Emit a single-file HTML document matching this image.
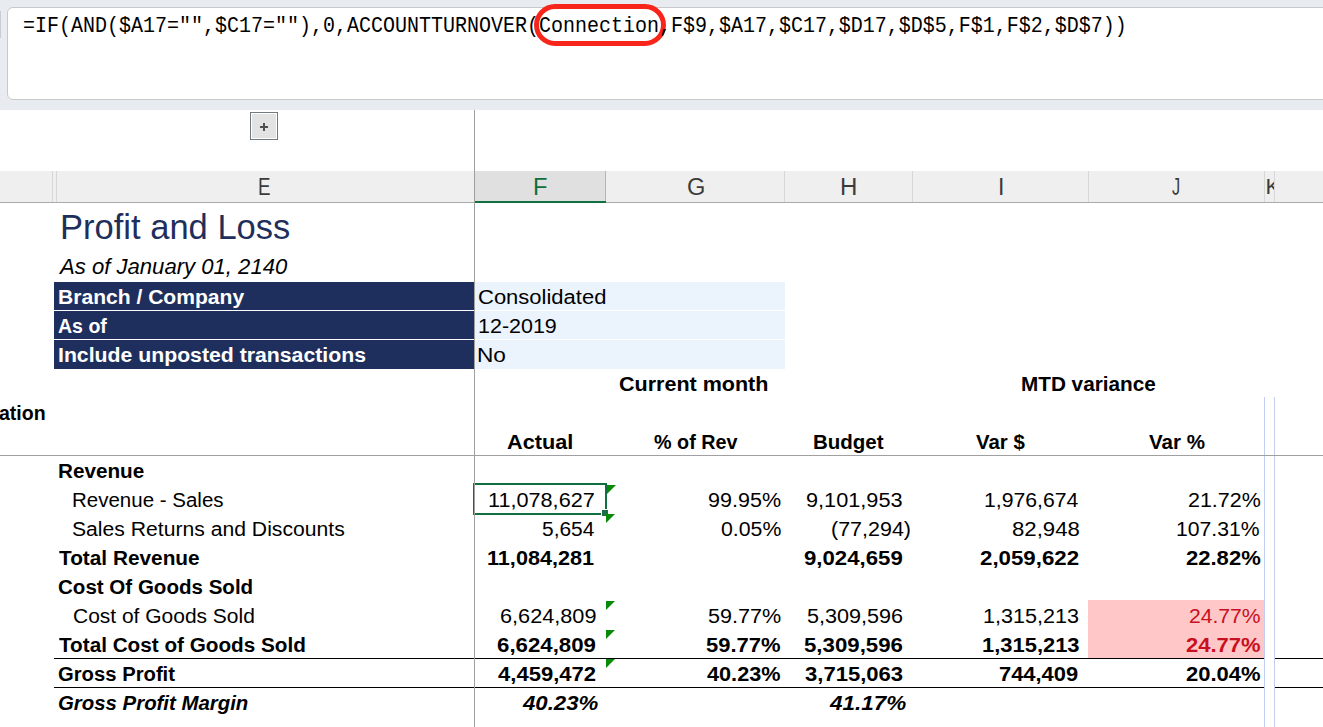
<!DOCTYPE html><html><head><meta charset="utf-8"><style>
html,body{margin:0;padding:0}body{width:1323px;height:727px;overflow:hidden;position:relative;background:#fff;font-family:"Liberation Sans",sans-serif}
.a{position:absolute}.t{position:absolute;white-space:pre;transform-origin:0 0}
</style></head><body>
<div class="a" style="left:0;top:0;width:1323px;height:110px;background:#e8ecf0"></div>
<div class="a" style="left:0;top:11px;width:1px;height:27px;background:#c9cdd1"></div>
<div class="a" style="left:7px;top:7px;width:1330px;height:91px;background:#fff;border:1px solid #c8c9ca;border-radius:6px"></div>
<div class="t" style="left:23px;top:15px;font-family:'Liberation Mono',monospace;font-size:21.6px;line-height:22px;color:#000;transform:scaleX(0.9259)">=IF(AND($A17=&quot;&quot;,$C17=&quot;&quot;),0,ACCOUNTTURNOVER(Connection,F$9,$A17,$C17,$D17,$D$5,F$1,F$2,$D$7))</div>
<div class="a" style="left:534px;top:4px;width:122px;height:32px;border:5px solid #f8251b;border-radius:21px"></div>
<div class="t" style="left:659px;top:15px;font-family:'Liberation Mono',monospace;font-size:21.6px;line-height:22px;color:#000;transform:scaleX(0.9259)">,</div>
<div class="a" style="left:250px;top:112px;width:26px;height:26px;border:1px solid #707880;background:#fff"></div>
<div class="a" style="left:252px;top:114px;width:24px;height:24px;background:#e3e3e3"></div>
<div class="a" style="left:260px;top:126px;width:8px;height:2px;background:#505050"></div>
<div class="a" style="left:263px;top:123px;width:2px;height:8px;background:#505050"></div>
<div class="a" style="left:0;top:171px;width:1323px;height:31px;background:#efefef"></div>
<div class="a" style="left:475px;top:171px;width:130px;height:31px;background:#e0e0e0"></div>
<div class="a" style="left:0;top:202px;width:1323px;height:1px;background:#a9a9a9"></div>
<div class="a" style="left:52px;top:171px;width:1px;height:31px;background:#d8d8d8"></div>
<div class="a" style="left:56px;top:171px;width:1px;height:31px;background:#d8d8d8"></div>
<div class="a" style="left:784px;top:171px;width:1px;height:31px;background:#d8d8d8"></div>
<div class="a" style="left:912px;top:171px;width:1px;height:31px;background:#d8d8d8"></div>
<div class="a" style="left:1088px;top:171px;width:1px;height:31px;background:#d8d8d8"></div>
<div class="a" style="left:1264px;top:171px;width:1px;height:31px;background:#d8d8d8"></div>
<div class="a" style="left:1274px;top:171px;width:1px;height:31px;background:#d8d8d8"></div>
<div class="a" style="left:605px;top:171px;width:1px;height:31px;background:#b4b4b4"></div>
<div class="a" style="left:475px;top:201px;width:131px;height:2px;background:#107040"></div>
<div class="a" style="left:54px;top:282px;width:420px;height:28px;background:#1f2f5d"></div>
<div class="a" style="left:475px;top:282px;width:310px;height:28px;background:#ebf3fd"></div>
<div class="a" style="left:54px;top:311px;width:420px;height:28px;background:#1f2f5d"></div>
<div class="a" style="left:475px;top:311px;width:310px;height:28px;background:#ebf3fd"></div>
<div class="a" style="left:54px;top:340px;width:420px;height:29px;background:#1f2f5d"></div>
<div class="a" style="left:475px;top:340px;width:310px;height:29px;background:#ebf3fd"></div>
<div class="a" style="left:1088px;top:600px;width:177px;height:58px;background:#ffc7c8"></div>
<div class="a" style="left:1264px;top:397px;width:1px;height:330px;background:#c2cfee"></div>
<div class="a" style="left:1274px;top:397px;width:1px;height:330px;background:#c2cfee"></div>
<div class="a" style="left:54px;top:658px;width:1210px;height:1px;background:#000"></div>
<div class="a" style="left:1275px;top:658px;width:48px;height:1px;background:#000"></div>
<div class="a" style="left:54px;top:687px;width:1210px;height:1px;background:#000"></div>
<div class="a" style="left:1275px;top:687px;width:48px;height:1px;background:#000"></div>
<div class="a" style="left:0;top:455px;width:1323px;height:1px;background:#a0a0a0"></div>
<div class="a" style="left:474px;top:110px;width:1px;height:617px;background:#a0a0a0"></div>
<div class="t" style="left:258.27px;top:176px;font-family:'Liberation Sans';font-size:23px;line-height:23px;color:#3b3b3b;transform:scaleX(0.8154);">E</div>
<div class="t" style="left:532.95px;top:176px;font-family:'Liberation Sans';font-size:23px;line-height:23px;color:#0f6e3a;transform:scaleX(1.0273);">F</div>
<div class="t" style="left:686.97px;top:176px;font-family:'Liberation Sans';font-size:23px;line-height:23px;color:#3b3b3b;transform:scaleX(1.0267);">G</div>
<div class="t" style="left:839.51px;top:176px;font-family:'Liberation Sans';font-size:23px;line-height:23px;color:#3b3b3b;transform:scaleX(1.0462);">H</div>
<div class="t" style="left:998.05px;top:176px;font-family:'Liberation Sans';font-size:23px;line-height:23px;color:#3b3b3b;">I</div>
<div class="t" style="left:1172.29px;top:176px;font-family:'Liberation Sans';font-size:23px;line-height:23px;color:#3b3b3b;transform:scaleX(0.7111);">J</div>
<div class="t" style="left:60.14px;top:209px;font-family:'Liberation Sans';font-size:35px;line-height:35px;color:#1f2f5c;transform:scaleX(0.9865);">Profit and Loss</div>
<div class="t" style="left:60.00px;top:256px;font-family:'Liberation Sans';font-size:22px;line-height:22px;color:#000;font-style:italic;transform:scaleX(1.0044);">As of January 01, 2140</div>
<div class="t" style="left:58.15px;top:287px;font-family:'Liberation Sans';font-size:20px;line-height:20px;color:#fff;font-weight:bold;transform:scaleX(1.0534);">Branch / Company</div>
<div class="t" style="left:58.02px;top:316px;font-family:'Liberation Sans';font-size:20px;line-height:20px;color:#fff;font-weight:bold;transform:scaleX(0.9776);">As of</div>
<div class="t" style="left:57.94px;top:345px;font-family:'Liberation Sans';font-size:20px;line-height:20px;color:#fff;font-weight:bold;transform:scaleX(1.0618);">Include unposted transactions</div>
<div class="t" style="left:477.60px;top:287px;font-family:'Liberation Sans';font-size:20px;line-height:20px;color:#000;transform:scaleX(1.1000);">Consolidated</div>
<div class="t" style="left:477.63px;top:316px;font-family:'Liberation Sans';font-size:20px;line-height:20px;color:#000;transform:scaleX(1.0736);">12-2019</div>
<div class="t" style="left:477.04px;top:345px;font-family:'Liberation Sans';font-size:20px;line-height:20px;color:#000;transform:scaleX(1.1304);">No</div>
<div class="t" style="left:618.62px;top:374px;font-family:'Liberation Sans';font-size:20px;line-height:20px;color:#000;font-weight:bold;transform:scaleX(1.0759);">Current month</div>
<div class="t" style="left:1020.96px;top:374px;font-family:'Liberation Sans';font-size:20px;line-height:20px;color:#000;font-weight:bold;transform:scaleX(1.0357);">MTD variance</div>
<div class="t" style="left:-0.98px;top:403px;font-family:'Liberation Sans';font-size:20px;line-height:20px;color:#000;font-weight:bold;transform:scaleX(0.9761);">ation</div>
<div class="t" style="left:506.62px;top:432px;font-family:'Liberation Sans';font-size:20px;line-height:20px;color:#000;font-weight:bold;transform:scaleX(1.0831);">Actual</div>
<div class="t" style="left:653.70px;top:432px;font-family:'Liberation Sans';font-size:20px;line-height:20px;color:#000;font-weight:bold;transform:scaleX(0.9881);">% of Rev</div>
<div class="t" style="left:812.77px;top:432px;font-family:'Liberation Sans';font-size:20px;line-height:20px;color:#000;font-weight:bold;transform:scaleX(1.0250);">Budget</div>
<div class="t" style="left:976.40px;top:432px;font-family:'Liberation Sans';font-size:20px;line-height:20px;color:#000;font-weight:bold;transform:scaleX(1.0208);">Var $</div>
<div class="t" style="left:1148.80px;top:432px;font-family:'Liberation Sans';font-size:20px;line-height:20px;color:#000;font-weight:bold;transform:scaleX(1.0278);">Var %</div>
<div class="t" style="left:58.37px;top:461px;font-family:'Liberation Sans';font-size:20px;line-height:20px;color:#000;font-weight:bold;transform:scaleX(1.0341);">Revenue</div>
<div class="t" style="left:72.05px;top:490px;font-family:'Liberation Sans';font-size:20px;line-height:20px;color:#000;transform:scaleX(1.0248);">Revenue - Sales</div>
<div class="t" style="left:72.34px;top:519px;font-family:'Liberation Sans';font-size:20px;line-height:20px;color:#000;transform:scaleX(1.0574);">Sales Returns and Discounts</div>
<div class="t" style="left:58.90px;top:548px;font-family:'Liberation Sans';font-size:20px;line-height:20px;color:#000;font-weight:bold;transform:scaleX(1.0400);">Total Revenue</div>
<div class="t" style="left:57.87px;top:577px;font-family:'Liberation Sans';font-size:20px;line-height:20px;color:#000;font-weight:bold;transform:scaleX(1.0271);">Cost Of Goods Sold</div>
<div class="t" style="left:73.05px;top:606px;font-family:'Liberation Sans';font-size:20px;line-height:20px;color:#000;transform:scaleX(1.0485);">Cost of Goods Sold</div>
<div class="t" style="left:58.90px;top:635px;font-family:'Liberation Sans';font-size:20px;line-height:20px;color:#000;font-weight:bold;transform:scaleX(1.0350);">Total Cost of Goods Sold</div>
<div class="t" style="left:57.99px;top:664px;font-family:'Liberation Sans';font-size:20px;line-height:20px;color:#000;font-weight:bold;transform:scaleX(1.0122);">Gross Profit</div>
<div class="t" style="left:58.38px;top:693px;font-family:'Liberation Sans';font-size:20px;line-height:20px;color:#000;font-weight:bold;font-style:italic;transform:scaleX(1.0195);">Gross Profit Margin</div>
<div class="t" style="left:488.12px;top:490px;font-family:'Liberation Sans';font-size:20px;line-height:20px;color:#000;transform:scaleX(1.0825);">11,078,627</div>
<div class="t" style="left:708.22px;top:490px;font-family:'Liberation Sans';font-size:20px;line-height:20px;color:#000;transform:scaleX(1.0773);">99.95%</div>
<div class="t" style="left:806.31px;top:490px;font-family:'Liberation Sans';font-size:20px;line-height:20px;color:#000;transform:scaleX(1.0851);">9,101,953</div>
<div class="t" style="left:984.14px;top:490px;font-family:'Liberation Sans';font-size:20px;line-height:20px;color:#000;transform:scaleX(1.0602);">1,976,674</div>
<div class="t" style="left:1188.03px;top:490px;font-family:'Liberation Sans';font-size:20px;line-height:20px;color:#000;transform:scaleX(1.0727);">21.72%</div>
<div class="t" style="left:541.85px;top:519px;font-family:'Liberation Sans';font-size:20px;line-height:20px;color:#000;transform:scaleX(1.0469);">5,654</div>
<div class="t" style="left:720.84px;top:519px;font-family:'Liberation Sans';font-size:20px;line-height:20px;color:#000;transform:scaleX(1.0636);">0.05%</div>
<div class="t" style="left:830.63px;top:519px;font-family:'Liberation Sans';font-size:20px;line-height:20px;color:#000;transform:scaleX(1.0736);">(77,294)</div>
<div class="t" style="left:1011.89px;top:519px;font-family:'Liberation Sans';font-size:20px;line-height:20px;color:#000;transform:scaleX(1.1102);">82,948</div>
<div class="t" style="left:1176.44px;top:519px;font-family:'Liberation Sans';font-size:20px;line-height:20px;color:#000;transform:scaleX(1.0577);">107.31%</div>
<div class="t" style="left:486.62px;top:548px;font-family:'Liberation Sans';font-size:20px;line-height:20px;color:#000;font-weight:bold;transform:scaleX(1.0816);">11,084,281</div>
<div class="t" style="left:804.09px;top:548px;font-family:'Liberation Sans';font-size:20px;line-height:20px;color:#000;font-weight:bold;transform:scaleX(1.1103);">9,024,659</div>
<div class="t" style="left:980.49px;top:548px;font-family:'Liberation Sans';font-size:20px;line-height:20px;color:#000;font-weight:bold;transform:scaleX(1.1138);">2,059,622</div>
<div class="t" style="left:1186.20px;top:548px;font-family:'Liberation Sans';font-size:20px;line-height:20px;color:#000;font-weight:bold;transform:scaleX(1.1015);">22.82%</div>
<div class="t" style="left:499.52px;top:606px;font-family:'Liberation Sans';font-size:20px;line-height:20px;color:#000;transform:scaleX(1.0839);">6,624,809</div>
<div class="t" style="left:708.22px;top:606px;font-family:'Liberation Sans';font-size:20px;line-height:20px;color:#000;transform:scaleX(1.0773);">59.77%</div>
<div class="t" style="left:806.92px;top:606px;font-family:'Liberation Sans';font-size:20px;line-height:20px;color:#000;transform:scaleX(1.0805);">5,309,596</div>
<div class="t" style="left:983.12px;top:606px;font-family:'Liberation Sans';font-size:20px;line-height:20px;color:#000;transform:scaleX(1.0782);">1,315,213</div>
<div class="t" style="left:1188.64px;top:606px;font-family:'Liberation Sans';font-size:20px;line-height:20px;color:#c8101e;transform:scaleX(1.0561);">24.77%</div>
<div class="t" style="left:496.99px;top:635px;font-family:'Liberation Sans';font-size:20px;line-height:20px;color:#000;font-weight:bold;transform:scaleX(1.1126);">6,624,809</div>
<div class="t" style="left:706.30px;top:635px;font-family:'Liberation Sans';font-size:20px;line-height:20px;color:#000;font-weight:bold;transform:scaleX(1.1000);">59.77%</div>
<div class="t" style="left:804.19px;top:635px;font-family:'Liberation Sans';font-size:20px;line-height:20px;color:#000;font-weight:bold;transform:scaleX(1.1115);">5,309,596</div>
<div class="t" style="left:981.50px;top:635px;font-family:'Liberation Sans';font-size:20px;line-height:20px;color:#000;font-weight:bold;transform:scaleX(1.0966);">1,315,213</div>
<div class="t" style="left:1185.80px;top:635px;font-family:'Liberation Sans';font-size:20px;line-height:20px;color:#c8101e;font-weight:bold;transform:scaleX(1.0985);">24.77%</div>
<div class="t" style="left:498.00px;top:664px;font-family:'Liberation Sans';font-size:20px;line-height:20px;color:#000;font-weight:bold;transform:scaleX(1.1023);">4,459,472</div>
<div class="t" style="left:707.40px;top:664px;font-family:'Liberation Sans';font-size:20px;line-height:20px;color:#000;font-weight:bold;transform:scaleX(1.0836);">40.23%</div>
<div class="t" style="left:805.00px;top:664px;font-family:'Liberation Sans';font-size:20px;line-height:20px;color:#000;font-weight:bold;transform:scaleX(1.1023);">3,715,063</div>
<div class="t" style="left:999.21px;top:664px;font-family:'Liberation Sans';font-size:20px;line-height:20px;color:#000;font-weight:bold;transform:scaleX(1.0944);">744,409</div>
<div class="t" style="left:1185.80px;top:664px;font-family:'Liberation Sans';font-size:20px;line-height:20px;color:#000;font-weight:bold;transform:scaleX(1.0985);">20.04%</div>
<div class="t" style="left:523.00px;top:693px;font-family:'Liberation Sans';font-size:20px;line-height:20px;color:#000;font-weight:bold;font-style:italic;transform:scaleX(1.1090);">40.23%</div>
<div class="t" style="left:829.50px;top:693px;font-family:'Liberation Sans';font-size:20px;line-height:20px;color:#000;font-weight:bold;font-style:italic;transform:scaleX(1.1239);">41.17%</div>
<div class="a" style="left:1265px;top:171px;width:9px;height:31px;overflow:hidden"><div class="t" style="left:0.5px;top:5px;font-size:22px;line-height:22px;color:#3b3b3b">K</div></div>
<div class="a" style="left:473px;top:483px;width:134px;height:2px;background:#107040"></div>
<div class="a" style="left:473px;top:483px;width:2px;height:32px;background:#107040"></div>
<div class="a" style="left:605px;top:483px;width:2px;height:26px;background:#107040"></div>
<div class="a" style="left:473px;top:513px;width:128px;height:2px;background:#107040"></div>
<div class="a" style="left:602px;top:510px;width:6px;height:6px;background:#1d6f45"></div>
<div class="a" style="left:474px;top:483px;width:1px;height:32px;background:#a0a0a0"></div>
<svg class="a" style="left:0;top:0" width="1323" height="727">
<polygon points="607,485 616,485 607,494" fill="#078a07"/>
<polygon points="606,514 615,514 606,523" fill="#078a07"/>
<polygon points="606,601 615,601 606,610" fill="#078a07"/>
<polygon points="606,630 615,630 606,639" fill="#078a07"/>
<polygon points="606,659 615,659 606,668" fill="#078a07"/>
</svg>
</body></html>
